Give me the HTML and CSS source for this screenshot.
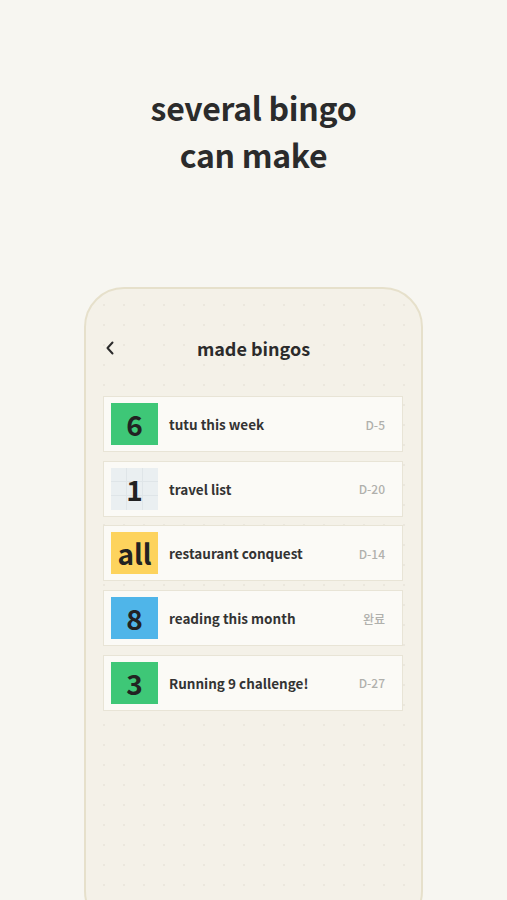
FILE: index.html
```html
<!DOCTYPE html>
<html>
<head>
<meta charset="utf-8">
<link rel="stylesheet" href="styles.css">
</head>
<body>
<div class="page">
  <h1 class="headline">several bingo<br>can make</h1>
  <div class="phone">
    <div class="topbar">
      <svg class="back" width="12" height="16" viewBox="0 0 12 16"><path d="M8.5 2.5 L3.5 8 L8.5 13.5" fill="none" stroke="#2b2b2b" stroke-width="2" stroke-linecap="round" stroke-linejoin="round"/></svg>
      <div class="title">made bingos</div>
    </div>
    <div class="list">
      <div class="row"><div class="badge green">6</div><div class="name">tutu this week</div><div class="tag">D-5</div></div>
      <div class="row"><div class="badge grid">1</div><div class="name">travel list</div><div class="tag">D-20</div></div>
      <div class="row"><div class="badge yellow">all</div><div class="name">restaurant conquest</div><div class="tag">D-14</div></div>
      <div class="row"><div class="badge blue">8</div><div class="name">reading this month</div><div class="tag">완료</div></div>
      <div class="row"><div class="badge green">3</div><div class="name">Running 9 challenge!</div><div class="tag">D-27</div></div>
    </div>
  </div>
</div>
</body>
</html>
```
FILE: styles.css
```css
html, body {
  margin: 0;
  padding: 0;
  background: #f7f6f1;
  height: 100%;
  overflow: hidden;
}
body {
  font-family: "Noto Sans CJK KR", "Noto Sans", sans-serif;
  color: #2a2a2a;
}
.page {
  display: flex;
  flex-direction: column;
  align-items: center;
}
.headline {
  margin: 84px 0 0;
  font-size: 32px;
  line-height: 47px;
  font-weight: 700;
  text-align: center;
  color: #2b2b2b;
  letter-spacing: -0.3px;
}
.phone {
  margin-top: 109px;
  width: 335px;
  height: 640px;
  border: 2px solid #e6e0cb;
  border-radius: 40px;
  background-color: #f4f1e8;
  background-image: radial-gradient(circle, #ebe7dd 1px, transparent 1.3px);
  background-size: 20px 20px;
  background-position: 8px 6px;
  display: flex;
  flex-direction: column;
  align-items: center;
}
.topbar {
  position: relative;
  width: 100%;
  height: 50px;
  margin-top: 34px;
  display: flex;
  align-items: center;
  justify-content: center;
}
.back {
  position: absolute;
  left: 18px;
  top: 17px;
}
.title {
  font-size: 18px;
  font-weight: 700;
  color: #2b2b2b;
}
.list {
  margin-top: 23px;
  width: 300px;
  display: flex;
  flex-direction: column;
  gap: 8.7px;
  margin-left: -1px;
}
.row {
  height: 54px;
  background: #fbfaf6;
  border: 1px solid #e8e4d6;
  display: flex;
  align-items: center;
  padding: 0 17px 0 7px;
  box-sizing: content-box;
}
.badge {
  width: 47px;
  height: 42px;
  display: flex;
  align-items: center;
  justify-content: center;
  font-size: 28px;
  font-weight: 700;
  color: #222;
  flex: none;
}
.green { background: #3ec777; }
.yellow { background: #fdd35d; }
.blue { background: #4fb5e9; }
.grid {
  background-color: #eaeff1;
  background-image:
    linear-gradient(to right, transparent 15px, #dfe5e8 15px, #dfe5e8 16px, transparent 16px, transparent 31px, #dfe5e8 31px, #dfe5e8 32px, transparent 32px),
    linear-gradient(to bottom, transparent 13px, #dfe5e8 13px, #dfe5e8 14px, transparent 14px, transparent 27px, #dfe5e8 27px, #dfe5e8 28px, transparent 28px);
}
.name {
  margin-left: 11px;
  font-size: 13.5px;
  font-weight: 700;
  color: #333;
  flex: 1;
}
.tag {
  font-size: 12px;
  color: #b0b0ac;
  font-weight: 500;
}
```
